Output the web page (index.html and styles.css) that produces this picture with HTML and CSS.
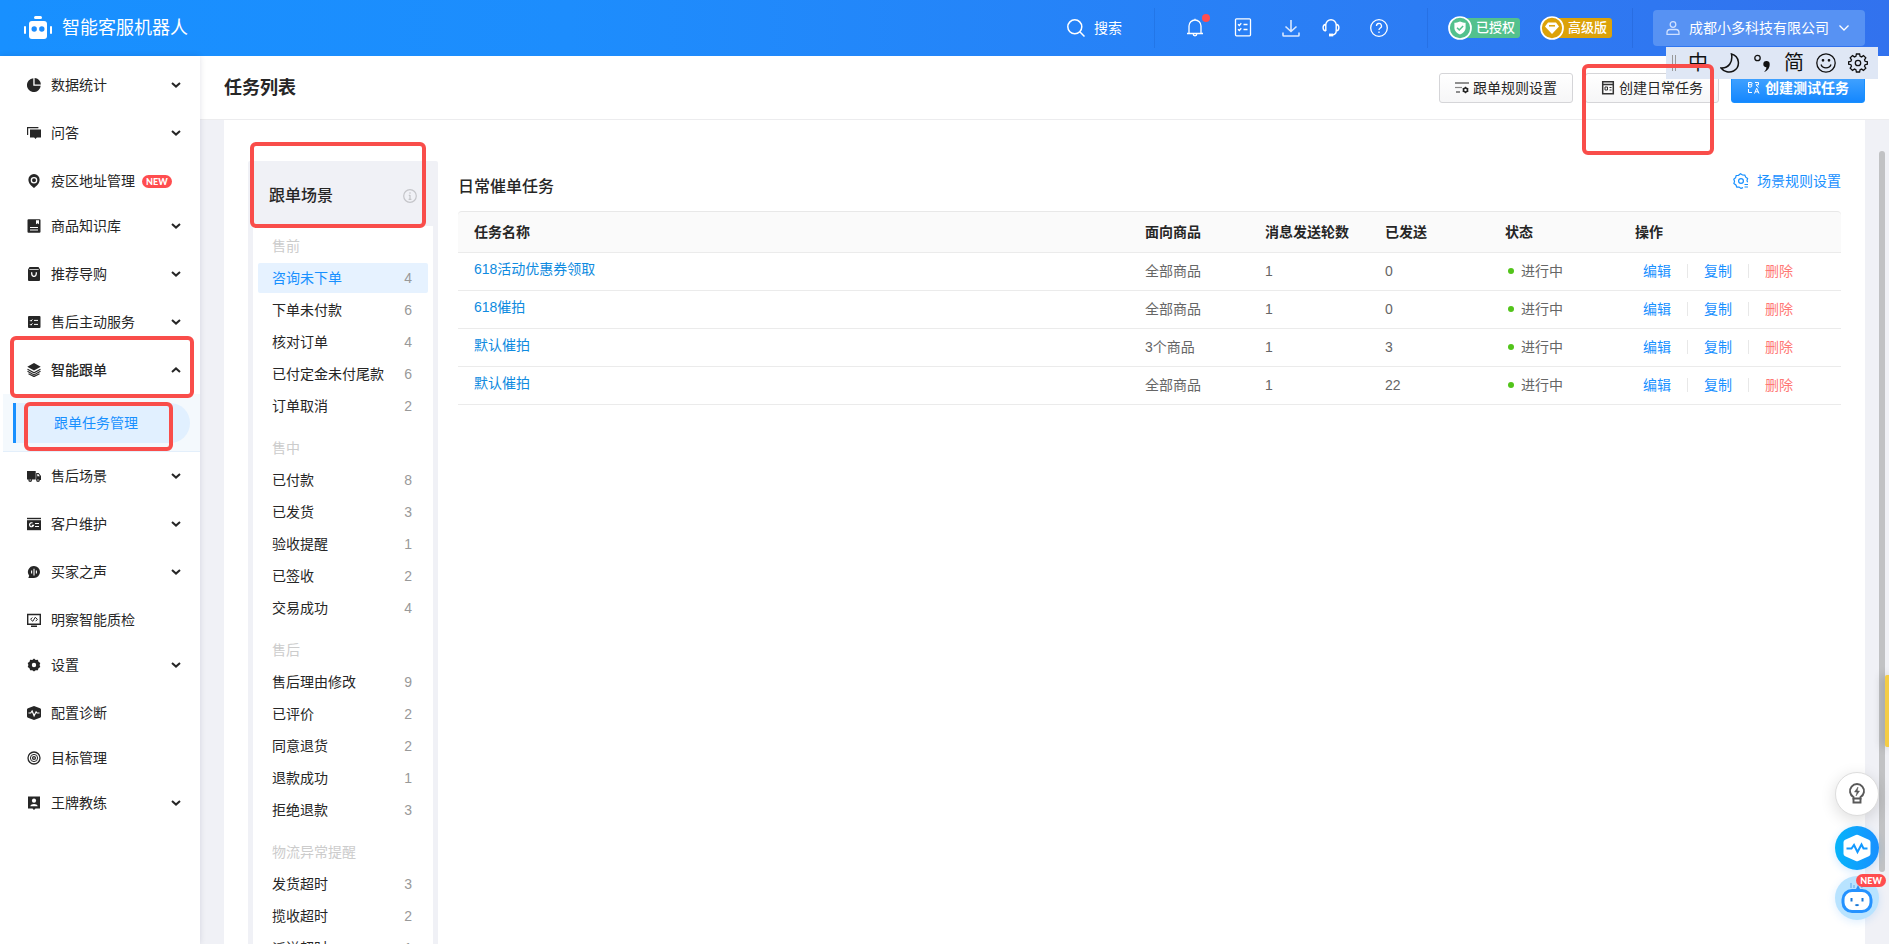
FILE: index.html
```html
<!DOCTYPE html>
<html lang="zh-CN">
<head>
<meta charset="utf-8">
<meta name="viewport" content="width=device-width, initial-scale=1">
<title>任务列表 - 智能客服机器人</title>
<link rel="stylesheet" href="styles.css">
</head>
<body>
<svg class="sprite" aria-hidden="true">
  <symbol id="chev" viewBox="0 0 10 6"><path d="M1 1l4 3.6L9 1" fill="none" stroke="currentColor" stroke-width="2"/></symbol>
  <symbol id="pie" viewBox="0 0 14 14"><path d="M6.3.3v7.4h7.4A6.9 6.9 0 1 1 6.3.3z"/><path d="M7.6 0a6.6 6.6 0 0 1 6.3 6.4H7.6z"/></symbol>
  <symbol id="chat" viewBox="0 0 14 14"><path d="M.6 9V1.6h10.8" fill="none" stroke="currentColor" stroke-width="1.2"/><path d="M3 3.4h11v8H9.8L8.5 13l-1.300-1.600H3z"/></symbol>
  <symbol id="pin" viewBox="0 0 14 14"><path fill-rule="evenodd" d="M7 0a5.600 5.600 0 0 1 5.600 5.800c0 3.600-3 6.200-5.600 8.200-2.600-2-5.600-4.600-5.600-8.200A5.600 5.600 0 0 1 7 0zm0 2.900a3.300 3.300 0 1 0 0 6.600 3.300 3.300 0 0 0 0-6.600zm0 1.300a2 2 0 1 1 0 4 2 2 0 0 1 0-4z"/><circle cx="7" cy="6.200" r=".9"/></symbol>
  <symbol id="book" viewBox="0 0 14 14"><path fill-rule="evenodd" d="M1.500.3h11a1 1 0 0 1 1 1v11.500a1 1 0 0 1-1 1h-11a1 1 0 0 1-1-1V1.300a1 1 0 0 1 1-1zM9 1.300v4l1.500-1 1.500 1v-4zM3 8v1h8V8zm0 2.500v1h8v-1z"/></symbol>
  <symbol id="bag" viewBox="0 0 14 14"><path fill-rule="evenodd" d="M2.500 0h9L13 2.500V13a1 1 0 0 1-1 1H2a1 1 0 0 1-1-1V2.500zM2.300 2.300v.8h9.400v-.8zM4 5.300c0 4 1.500 4.800 3 4.800s3-.8 3-4.800H8.700c0 2.600-.6 3.400-1.700 3.400s-1.700-.8-1.700-3.400z"/></symbol>
  <symbol id="check" viewBox="0 0 14 14"><rect x="1" y="1" width="12.500" height="12" rx="1"/><path d="M3 5.200l1 1 1.400-1.800M3 9.200l1 1 1.400-1.800M7 5.400h4M7 9.400h4" fill="none" stroke="#fff" stroke-width="1"/></symbol>
  <symbol id="layers" viewBox="0 0 14 14"><path d="M7 0l6.700 3.700L7 7.400.3 3.700z"/><path d="M.5 6.200L7 9.800l6.500-3.600M.5 8.300L7 11.900l6.500-3.600M1.500 10.700L7 13.600l5.500-2.900" fill="none" stroke="currentColor" stroke-width="1.100"/></symbol>
  <symbol id="truck" viewBox="0 0 14 14"><path d="M0 2h8.700v8.500H0z"/><path fill-rule="evenodd" d="M9.200 4h2.500L14 7v4H9.200zm1.100 1v2.300h2.500L11.300 5z"/><circle cx="3.200" cy="11" r="1.900"/><circle cx="11" cy="11" r="1.900"/><path d="M2.600 11h1.200M10.400 11h1.200" stroke="#fff"/></symbol>
  <symbol id="card" viewBox="0 0 14 14"><path d="M0 .8h14v1.400H0z"/><path d="M0 3.200h14v10H0z"/><path d="M5.600 6a2 2 0 1 0 .9 2.400H4.800M8 6.500h4M8 9.500h4" fill="none" stroke="#fff" stroke-width="1.200"/></symbol>
  <symbol id="voice" viewBox="0 0 14 14"><path d="M7 1a6 6 0 1 1 0 12H1.300l.9-2.300A6 6 0 0 1 7 1z"/><path d="M4.600 5.500v3M7 3.800v6.600M9.400 5.500v3" stroke="#fff" stroke-width="1.100"/></symbol>
  <symbol id="screen" viewBox="0 0 14 14"><path d="M.7 1.500h12.600v9.700H.7zM4 13.300h6" fill="none" stroke="currentColor" stroke-width="1.400"/><path d="M5.300 4.500L3.600 6.300l2.200 2 2.400-4 2.200 2-1.700 1.900" fill="none" stroke="currentColor" stroke-width="1"/></symbol>
  <symbol id="gear" viewBox="0 0 14 14"><path fill-rule="evenodd" d="M7 .5l1.700 1.400 2.200-.1.600 2 1.800 1.300L12.600 7l.7 2-1.800 1.200-.6 2.100-2.200-.1L7 13.500l-1.700-1.300-2.200.1-.6-2.100L.7 9l.7-2-.7-1.900 1.800-1.300.6-2 2.200.1zM7 4.800A2.200 2.200 0 1 0 7 9.200a2.200 2.200 0 0 0 0-4.400z"/></symbol>
  <symbol id="pulse" viewBox="0 0 14 14"><path d="M7 0l6 2.200c.6.200 1 .6 1 1.200v7.200c0 .6-.4 1-1 1.200L7 14l-6-2.200c-.6-.2-1-.6-1-1.200V3.400c0-.6.400-1 1-1.200z"/><path d="M1.500 7h2.200l1.400-2 2 4.800 2-4L10 7h2.500" fill="none" stroke="#fff" stroke-width="1.200"/></symbol>
  <symbol id="target" viewBox="0 0 14 14"><g fill="none" stroke="currentColor" stroke-width="1.300"><circle cx="7" cy="7" r="6"/><circle cx="7" cy="7" r="3.600" stroke-width="1"/><circle cx="7" cy="7" r="1.400"/></g></symbol>
  <symbol id="coach" viewBox="0 0 14 14"><path d="M1 .5h12v12H8.500L7 14l-1.500-1.500H1z"/><circle cx="7" cy="4.700" r="2.100" fill="#fff"/><path d="M3.300 10.200c.4-3 7-3 7.400 0z" fill="#fff"/></symbol>
  <symbol id="geartooth" viewBox="0 0 20 20"><path d="M8.400 1h3.200l.5 2.300 1.400.6 2-1.300 2.300 2.300-1.300 2 .6 1.400 2.300.5v2.400l-2.300.5-.6 1.400 1.300 2-2.300 2.300-2-1.300-1.400.6-.5 2.300H8.400l-.5-2.300-1.400-.6-2 1.300-2.300-2.300 1.300-2-.6-1.400-2.300-.5V8.800l2.300-.5.6-1.400-1.300-2 2.300-2.300 2 1.300 1.400-.6z" fill="none" stroke="currentColor" stroke-width="1.300"/><circle cx="10" cy="10" r="2.700" fill="none" stroke="currentColor" stroke-width="1.300"/></symbol>
</svg>

<header class="topbar">
  <a class="brand" href="#">
    <svg width="28" height="24" viewBox="0 0 28 24" fill="#fff"><rect x="10" y="0" width="8" height="3" rx="1.500"/><rect x="5" y="5" width="18" height="18" rx="3"/><rect x="0" y="10" width="2" height="8" rx="1"/><rect x="26" y="10" width="2" height="8" rx="1"/><circle cx="10.200" cy="13" r="2.700" fill="#1d8dfd"/><circle cx="17.800" cy="13" r="2.700" fill="#1d8dfd"/></svg>
    <span>智能客服机器人</span>
  </a>
  <div class="tools">
    <button class="search"><svg width="18" height="18" viewBox="0 0 18 18" fill="none" stroke="#fff" stroke-width="1.500"><circle cx="7.800" cy="7.800" r="7"/><path d="M12.800 12.800l4.700 4.700"/></svg>搜索</button>
    <div class="icons">
      <button aria-label="通知"><svg width="18" height="20" viewBox="0 0 18 20" fill="none" stroke="#fff" stroke-width="1.300"><path d="M1 15.500h16M3 15.500V8a6 6 0 0 1 12 0v7.500M7.200 16a1.800 1.800 0 0 0 3.600 0M9 2V.7"/></svg><i class="dot"></i></button>
      <button aria-label="任务"><svg width="18" height="20" viewBox="0 0 18 20" fill="none" stroke="#fff" stroke-width="1.300"><rect x="1.500" y=".8" width="15" height="17" rx="1"/><path d="M4 6.300l1.300 1.200 2-2.200M9.500 6.500h4M4 11.300l1.300 1.200 2-2.200M9.500 11.500h4"/></svg></button>
      <button aria-label="下载"><svg width="18" height="20" viewBox="0 0 18 20" fill="none" stroke="#d9e8ff" stroke-width="1.600"><path d="M9 2v11.500M3.500 8.500L9 13.500l5.500-5M1 14.500v2.700a.8.800 0 0 0 .8.800h14.400a.8.800 0 0 0 .8-.8v-2.700"/></svg></button>
      <button class="snug" aria-label="客服"><svg width="18" height="20" viewBox="0 0 18 20" fill="none" stroke="#fff" stroke-width="1.400"><path d="M3.800 13V7a5.200 5.200 0 0 1 10.400 0v6c0 2.500-1.700 3.800-4.200 4M3.800 6.300C.2 6.800.2 12.500 3.800 13M14.200 6.300c3.600.5 3.600 6.200 0 6.700"/><rect x="7.700" y="16.300" width="2.800" height="1.400"/></svg></button>
      <button aria-label="帮助"><svg width="18" height="20" viewBox="0 0 18 20" fill="none" stroke="#fff" stroke-width="1.300"><circle cx="9" cy="10" r="8.300"/><path d="M6.500 8a2.500 2.500 0 1 1 3.600 2.200c-.8.500-1.100.8-1.100 1.800M9 13.500V15"/></svg></button>
    </div>
    <div class="plans">
      <span class="plan"><svg width="24" height="24" viewBox="0 0 24 24"><circle cx="12" cy="12" r="11" fill="#53c18d" stroke="#fff" stroke-width="1.700"/><path d="M12 5.500c2 1 4 1.300 5.600 1.300v5c0 3.500-2.800 5.500-5.600 6.700-2.800-1.200-5.600-3.200-5.600-6.700v-5c1.600 0 3.600-.3 5.600-1.300z" fill="#fff"/><path d="M9 11.700l2.300 2.200 3.800-4" fill="none" stroke="#53c18d" stroke-width="1.500"/></svg><b>已授权</b></span>
      <span class="plan gold"><svg width="24" height="24" viewBox="0 0 24 24"><circle cx="12" cy="12" r="11" fill="#dca209" stroke="#fff" stroke-width="1.700"/><path d="M8 6.500h8l3 4-7 7.500-7-7.500z" fill="#fff"/><path d="M9 9.800h6" stroke="#dca209" stroke-width="1.500"/></svg><b>高级版</b></span>
    </div>
    <button class="company"><svg width="14" height="14" viewBox="0 0 14 14" fill="none" stroke="#cfe0ff" stroke-width="1.300"><circle cx="7" cy="3.500" r="2.800"/><path d="M1 13.300v-1.500c0-2 1.300-3.300 3-3.300h6c1.700 0 3 1.300 3 3.300v1.500z"/></svg><span>成都小多科技有限公司</span><svg width="10" height="6" viewBox="0 0 10 6" fill="none" stroke="#fff" stroke-width="1.300"><path d="M.5.500L5 5l4.500-4.500"/></svg></button>
  </div>
</header>

<div class="shell">
  <nav class="sidebar">
    <button class="item"><svg class="ico"><use href="#pie"/></svg>数据统计<svg class="chev"><use href="#chev"/></svg></button>
    <button class="item"><svg class="ico"><use href="#chat"/></svg>问答<svg class="chev"><use href="#chev"/></svg></button>
    <a class="item leaf" href="#"><svg class="ico"><use href="#pin"/></svg>疫区地址管理<span class="new">NEW</span></a>
    <button class="item"><svg class="ico"><use href="#book"/></svg>商品知识库<svg class="chev"><use href="#chev"/></svg></button>
    <button class="item"><svg class="ico"><use href="#bag"/></svg>推荐导购<svg class="chev"><use href="#chev"/></svg></button>
    <button class="item"><svg class="ico"><use href="#check"/></svg>售后主动服务<svg class="chev"><use href="#chev"/></svg></button>
    <button class="item open" aria-expanded="true"><svg class="ico"><use href="#layers"/></svg>智能跟单<svg class="chev"><use href="#chev"/></svg><i class="mark mark-group"></i></button>
    <div class="sub"><a class="current" href="#">跟单任务管理<i class="mark mark-sub"></i></a></div>
    <button class="item"><svg class="ico"><use href="#truck"/></svg>售后场景<svg class="chev"><use href="#chev"/></svg></button>
    <button class="item"><svg class="ico"><use href="#card"/></svg>客户维护<svg class="chev"><use href="#chev"/></svg></button>
    <button class="item"><svg class="ico"><use href="#voice"/></svg>买家之声<svg class="chev"><use href="#chev"/></svg></button>
    <a class="item leaf" href="#"><svg class="ico"><use href="#screen"/></svg>明察智能质检</a>
    <button class="item"><svg class="ico"><use href="#gear"/></svg>设置<svg class="chev"><use href="#chev"/></svg></button>
    <a class="item leaf" href="#"><svg class="ico"><use href="#pulse"/></svg>配置诊断</a>
    <a class="item leaf" href="#"><svg class="ico"><use href="#target"/></svg>目标管理</a>
    <button class="item"><svg class="ico"><use href="#coach"/></svg>王牌教练<svg class="chev"><use href="#chev"/></svg></button>
  </nav>

  <main class="main">
    <div class="titlebar">
      <h1>任务列表</h1>
      <div class="actions">
        <button class="btn"><svg width="14" height="14" viewBox="0 0 14 14" fill="none" stroke="#222" stroke-width="1.200"><path d="M0 2h14M1 11h4"/><path d="M0 6.500h7" stroke="#888"/><circle cx="10.500" cy="9" r="2" stroke-width="1.600"/><path d="M10.500 5.800v1.400M10.500 10.800v1.400M7.700 7.400l1.200.7M12.100 9.900l1.200.7M7.700 10.600l1.200-.7M12.100 8.100l1.200-.7"/></svg>跟单规则设置</button>
        <button class="btn"><svg width="14" height="14" viewBox="0 0 14 14" fill="none" stroke="#333" stroke-width="1.500"><path d="M1.700.8h10.600v12H1.700zM1.700 3.500h10.600"/><path d="M4 6h2.500v3H4zM8.500 6.500h2M8.500 9h2" stroke-width="1"/></svg>创建日常任务<i class="mark mark-create"></i></button>
        <button class="btn primary"><svg width="14" height="14" viewBox="0 0 14 14" fill="none" stroke="#fff" stroke-width="1"><path d="M1.500 6V1.500H4a1.100 1.100 0 0 1 0 2.200H1.500M4 3.700A1.200 1.200 0 0 1 4 6H1.500M8 1.500h3.500v2.300H9l2.500 2.700M1.500 8v3.500H5M7.500 12.500l2.200-5.300 2.300 5.300M8.300 10.800h2.900"/></svg>创建测试任务</button>
      </div>
    </div>
    <div class="page">
      <div class="content">
        <aside class="scenes">
          <div class="scenes-head"><h2>跟单场景</h2><svg width="14" height="14" viewBox="0 0 14 14" fill="none" stroke="#c4c5c9" stroke-width="1.200"><circle cx="7" cy="7" r="6.300"/><path d="M7 6v4.500M7 3.300v1.400M5.800 6.300H7M5.600 10.400h2.800"/></svg><i class="mark mark-scene"></i></div>
          <div class="scenes-list">
            <h3>售前</h3>
            <a class="on" href="#">咨询未下单<em>4</em></a><a href="#">下单未付款<em>6</em></a><a href="#">核对订单<em>4</em></a><a href="#">已付定金未付尾款<em>6</em></a><a href="#">订单取消<em>2</em></a>
            <h3>售中</h3>
            <a href="#">已付款<em>8</em></a><a href="#">已发货<em>3</em></a><a href="#">验收提醒<em>1</em></a><a href="#">已签收<em>2</em></a><a href="#">交易成功<em>4</em></a>
            <h3>售后</h3>
            <a href="#">售后理由修改<em>9</em></a><a href="#">已评价<em>2</em></a><a href="#">同意退货<em>2</em></a><a href="#">退款成功<em>1</em></a><a href="#">拒绝退款<em>3</em></a>
            <h3>物流异常提醒</h3>
            <a href="#">发货超时<em>3</em></a><a href="#">揽收超时<em>2</em></a><a href="#">派送超时<em>1</em></a>
          </div>
        </aside>
        <section class="tasks">
          <div class="tasks-head"><h2>日常催单任务</h2><a href="#"><svg width="16" height="16" viewBox="0 0 16 16" fill="none" stroke="#1890ff" stroke-width="1.200"><path d="M10 14.600l-2 .8-1.900-1.400-2.300.1-.9-2.200L.9 10.600 1.500 8.300.8 6.200l1.800-1.500.6-2.200 2.300-.2L7.500.8l2 1.200 2.300.1.900 2.100 1.900 1.300-.6 2.200.6 1.500"/><circle cx="8" cy="8" r="2.400"/><path d="M11.500 11.500H15M11.500 14H15"/></svg>场景规则设置</a></div>
          <table>
            <colgroup><col><col class="c120"><col class="c120"><col class="c120"><col class="c130"><col class="c222"></colgroup>
            <thead><tr><th>任务名称</th><th>面向商品</th><th>消息发送轮数</th><th>已发送</th><th>状态</th><th>操作</th></tr></thead>
            <tbody>
              <tr><td><a class="name" href="#">618活动优惠券领取</a></td><td>全部商品</td><td>1</td><td>0</td><td><span class="state">进行中</span></td><td><div class="ops"><button>编辑</button><button>复制</button><button class="del">删除</button></div></td></tr>
              <tr><td><a class="name" href="#">618催拍</a></td><td>全部商品</td><td>1</td><td>0</td><td><span class="state">进行中</span></td><td><div class="ops"><button>编辑</button><button>复制</button><button class="del">删除</button></div></td></tr>
              <tr><td><a class="name" href="#">默认催拍</a></td><td>3个商品</td><td>1</td><td>3</td><td><span class="state">进行中</span></td><td><div class="ops"><button>编辑</button><button>复制</button><button class="del">删除</button></div></td></tr>
              <tr><td><a class="name" href="#">默认催拍</a></td><td>全部商品</td><td>1</td><td>22</td><td><span class="state">进行中</span></td><td><div class="ops"><button>编辑</button><button>复制</button><button class="del">删除</button></div></td></tr>
            </tbody>
          </table>
        </section>
      </div>
    </div>
  </main>
</div>

<div class="scrollbar"></div>
<div class="side-tab"></div>

<div class="ime">
  <i class="grip"></i>
  <span>中</span>
  <svg width="20" height="20" viewBox="0 0 20 20" fill="none" stroke="#111" stroke-width="1.500"><path d="M11.500 1c8 2 9.500 13 2 17-4 2-9.500 1-12.500-3 8 .5 12-6.500 10.500-14z"/></svg>
  <svg width="20" height="20" viewBox="0 0 20 20"><circle cx="5.500" cy="5" r="2.700" fill="none" stroke="#111" stroke-width="1.300"/><path d="M14.500 8a3 3 0 0 1 3.200 3.200c0 3.500-1.700 6.300-5.700 7.800 1.800-1.800 2.400-3.200 2.400-4.700a3.100 3.100 0 0 1 .1-6.300z" fill="#111"/></svg>
  <span>简</span>
  <svg width="20" height="20" viewBox="0 0 20 20" fill="none" stroke="#111" stroke-width="1.300"><circle cx="10" cy="10" r="9.200"/><path d="M5 11.500c1.500 4.500 8.500 4.500 10 0"/><circle cx="7" cy="7.300" r=".7" fill="#111"/><circle cx="13" cy="7.300" r=".7" fill="#111"/></svg>
  <svg width="20" height="20" color="#111"><use href="#geartooth"/></svg>
</div>

<div class="floats">
  <button class="tip" aria-label="提示"><svg width="18" height="22" viewBox="0 0 18 22" fill="none" stroke="#595959" stroke-width="1.900"><path d="M5.500 15.500v-1.400a7 7 0 1 1 7 0v1.400z"/><path d="M5.500 15v4.500h7V15"/><path d="M10 4L6.500 9H9l-1 4 3.500-5H9.300z" fill="#595959" stroke-width=".5"/></svg></button>
  <button class="diag" aria-label="诊断"><svg width="28" height="28" viewBox="0 0 28 28"><path d="M12.800 1.100q1.200-.6 2.400 0l10.600 4.700q1.700.8 1.700 2.400v11.600q0 1.600-1.700 2.400l-10.600 4.700q-1.200.6-2.400 0L2.200 22.200Q.5 21.400.5 19.800V8.200q0-1.600 1.700-2.400z" fill="#fff"/><path d="M3.500 14.500h5l2.500-3.500 3.500 7 4-7.500 2 4h4" fill="none" stroke="#1298ff" stroke-width="2"/></svg></button>
  <button class="bot" aria-label="机器人"><svg width="32" height="34" viewBox="0 0 32 34"><path d="M10 2v5M13 4v3M20 3l1 4" stroke="#5aa9ee" fill="none"/><path d="M14 10l3-6 3 6z" fill="#2b8ff2"/><rect x="2" y="9.500" width="28" height="21" rx="9" fill="#fff" stroke="#2492ff" stroke-width="3"/><path d="M10.500 17v3.500M21.500 17v3.500M14.500 23.500c.6.900 2.400.9 3 0" stroke="#1677d8" stroke-width="2" fill="none"/></svg><span class="new">NEW</span></button>
</div>
</body>
</html>
```

FILE: styles.css
```css
* { box-sizing: border-box; }
body {
  margin: 0;
  height: 100vh;
  display: flex;
  flex-direction: column;
  overflow: hidden;
  position: relative;
  font: 14px/20px "Liberation Sans", "Noto Sans CJK SC", sans-serif;
  color: #262626;
  background: #f0f1f6;
}
h1, h2, h3 { margin: 0; font-weight: 500; }
a { color: inherit; text-decoration: none; }
button { font: inherit; color: inherit; background: none; border: 0; padding: 0; margin: 0; cursor: pointer; }
svg { flex: none; display: block; }
.sprite { position: absolute; width: 0; height: 0; }

/* top bar */
.topbar {
  flex: none;
  height: 56px;
  display: flex;
  align-items: center;
  justify-content: space-between;
  padding: 0 24px;
  color: #fff;
  background: linear-gradient(90deg, #1890ff, #1d8dfd 30%, #2c7cf4 75%, #3272ee);
}
.brand { display: flex; align-items: center; gap: 10px; font-size: 18px; line-height: 24px; }
.tools { display: flex; align-items: center; }
.search { display: flex; align-items: center; gap: 9px; padding-right: 32px; line-height: 40px; }
.icons {
  display: flex;
  gap: 30px;
  padding: 0 39px 0 31px;
  height: 40px;
  align-items: center;
  border: solid rgba(0, 40, 120, .12);
  border-width: 0 1px;
}
.icons button { position: relative; }
.icons .snug { margin-left: -8px; }
.dot { position: absolute; top: -4px; right: -6px; width: 8px; height: 8px; border-radius: 50%; background: #ff4d4f; }
.plans { display: flex; align-items: center; gap: 20px; height: 40px; padding: 0 20px; border-right: 1px solid rgba(0, 40, 120, .12); }
.plan { display: flex; align-items: center; }
.plan svg { position: relative; }
.plan b {
  margin-left: -12px;
  padding: 0 5px 0 16px;
  font-size: 13px;
  font-weight: 500;
  border-radius: 3px;
  background: #53c18d;
}
.gold b { background: #dca209; }
.company {
  display: flex;
  align-items: center;
  height: 36px;
  margin-left: 20px;
  padding: 0 16px 0 13px;
  gap: 9px;
  border-radius: 4px;
  background: #5792f3;
}
.company span { padding-right: 1px; }

/* side navigation */
.shell { flex: 1; min-height: 0; display: flex; }
.sidebar {
  flex: none;
  width: 200px;
  padding-top: 5px;
  background: #fff;
  box-shadow: 0 0 6px rgba(0, 20, 60, .12);
  z-index: 1;
}
.item {
  position: relative;
  display: flex;
  align-items: center;
  gap: 10px;
  width: 100%;
  height: 48px;
  padding: 0 19px 0 27px;
}
.leaf { margin-bottom: -3px; }
.ico { width: 14px; height: 14px; fill: currentColor; }
.chev { width: 10px; height: 6px; margin-left: auto; }
.open { font-weight: 500; }
.open .chev { transform: rotate(180deg); }
.new {
  padding: 0 4px;
  font: 900 9px/13px Lato, "Open Sans", sans-serif;
  color: #fff;
  border-radius: 7px;
  background: #ff4d4f;
}
.leaf .new { margin-left: -3px; }
.sub { margin-left: 3px; padding: 9px 10px 8px; border-bottom: 1px solid #e3effb; background: #f4f9fd; }
.current {
  position: relative;
  display: block;
  padding-left: 38px;
  line-height: 40px;
  color: #1890ff;
  border-left: 3px solid #1890ff;
  border-radius: 0 20px 20px 0;
  background: #e1f0ff;
}

/* highlight frames drawn over the page */
.mark { position: absolute; border: 4px solid #f94d4a; border-radius: 6px; pointer-events: none; z-index: 9; }
.mark-group { left: 10px; right: 6px; top: -10px; bottom: -4px; }
.mark-sub { left: 8px; right: 17px; top: -1px; bottom: -8px; }
.mark-scene { left: 2px; right: 12px; top: -19px; bottom: -2px; }
.mark-create { left: -4px; right: 4px; top: -10px; bottom: -53px; }

/* page */
.main { flex: 1; min-width: 0; display: flex; flex-direction: column; }
.titlebar {
  flex: none;
  display: flex;
  align-items: center;
  justify-content: space-between;
  height: 64px;
  padding: 0 24px;
  border-bottom: 1px solid #ececee;
  background: #fff;
}
.titlebar h1 { font-size: 18px; line-height: 24px; font-weight: 700; }
.actions { display: flex; gap: 12px; }
.btn {
  position: relative;
  display: flex;
  align-items: center;
  gap: 4px;
  height: 30px;
  padding: 0 15px;
  border: 1px solid #d5d5d8;
  border-radius: 3px;
  background: linear-gradient(#fff, #f6f6f7);
}
.primary { color: #fff; font-weight: 700; border-color: #1890ff; background: linear-gradient(#48a6ff, #1487ff); }
.page { flex: 1; min-height: 0; padding: 0 24px; }
.content { height: 100%; display: flex; gap: 20px; padding: 41px 24px 0; background: #fff; }
.scenes { flex: none; width: 190px; padding: 0 5px; border-radius: 2px 2px 0 0; background: #f0f1f6; }
.scenes-head {
  position: relative;
  display: flex;
  align-items: center;
  justify-content: space-between;
  height: 65px;
  margin: 0 -5px;
  padding: 5px 21px 0;
}
.scenes h2, .tasks h2 { font-size: 16px; line-height: 24px; }
.scenes-list { display: flex; flex-direction: column; gap: 2px; padding: 5px 5px 0; background: #fff; }
.scenes-list h3 { padding-left: 14px; font-size: 14px; font-weight: 400; line-height: 30px; color: #ccc; }
.scenes-list a + h3 { margin-top: 10px; }
.scenes-list a {
  display: flex;
  justify-content: space-between;
  padding: 0 16px 0 14px;
  line-height: 30px;
  border-radius: 2px;
}
.scenes-list em { font-style: normal; color: #999; }
.scenes-list .on { color: #1890ff; background: #e6f2ff; }

.tasks { flex: 1; min-width: 0; padding-top: 8px; }
.tasks-head { display: flex; align-items: flex-start; justify-content: space-between; height: 42px; }
.tasks h2 { padding-top: 6px; }
.tasks-head a { display: flex; align-items: center; gap: 8px; line-height: 24px; color: #1890ff; }
table { width: 100%; table-layout: fixed; border-collapse: separate; border-spacing: 0; }
.c120 { width: 120px; }
.c130 { width: 130px; }
.c222 { width: 222px; }
th, td { padding: 0 16px; text-align: left; border-bottom: 1px solid #ebebeb; }
th { height: 42px; font-weight: 600; border-top: 1px solid #e8e8e8; background: #fafafa; }
th:first-child { border-top-left-radius: 4px; }
th:last-child { border-top-right-radius: 4px; }
td { height: 38px; padding-bottom: 2px; color: #666; }
.name { display: block; padding-bottom: 4px; color: #0f8be0; }
.state { display: flex; align-items: center; gap: 7px; padding-left: 3px; }
.state::before { content: ""; width: 6px; height: 6px; border-radius: 50%; background: #52c41a; }
.ops { display: flex; align-items: center; padding-left: 8px; line-height: 14px; color: #1890ff; }
.ops button + button { margin-left: 16px; padding-left: 16px; border-left: 1px solid #e8e8e8; }
.ops .del { color: #ff7875; }

/* overlays */
.scrollbar { position: absolute; right: 4px; top: 151px; bottom: 72px; width: 6px; border-radius: 3px; background: #c1c2c4; }
.side-tab { position: absolute; right: 0; top: 675px; width: 4px; height: 72px; border-radius: 2px 0 0 2px; background: #f5cd45; box-shadow: -2px 0 10px rgba(0, 0, 0, .3); }
.ime {
  position: absolute;
  top: 47px;
  right: 11px;
  display: flex;
  align-items: center;
  justify-content: space-between;
  width: 212px;
  height: 32px;
  padding: 0 10px 0 6px;
  font-size: 20px;
  line-height: 32px;
  color: #111;
  background: #dfe7f5;
  z-index: 5;
}
.grip { width: 4px; height: 16px; border: solid #999; border-width: 0 1px; }
.floats { position: absolute; right: 10px; bottom: 24px; display: grid; justify-items: center; z-index: 6; }
.floats button { position: relative; display: grid; place-items: center; width: 44px; height: 44px; border-radius: 50%; }
.floats .tip { margin-bottom: 10px; border: 1px solid #ddd; background: #fff; box-shadow: 0 4px 16px rgba(0, 0, 0, .14); }
.floats .diag { margin-bottom: 6px; background: linear-gradient(90deg, #06b4fa, #1890ff); box-shadow: 0 2px 8px rgba(24, 144, 255, .2); }
.floats .bot { background: #b8e3ff; box-shadow: 0 2px 8px rgba(24, 144, 255, .15); }
.floats .new { position: absolute; top: -2px; right: -7px; }
```
